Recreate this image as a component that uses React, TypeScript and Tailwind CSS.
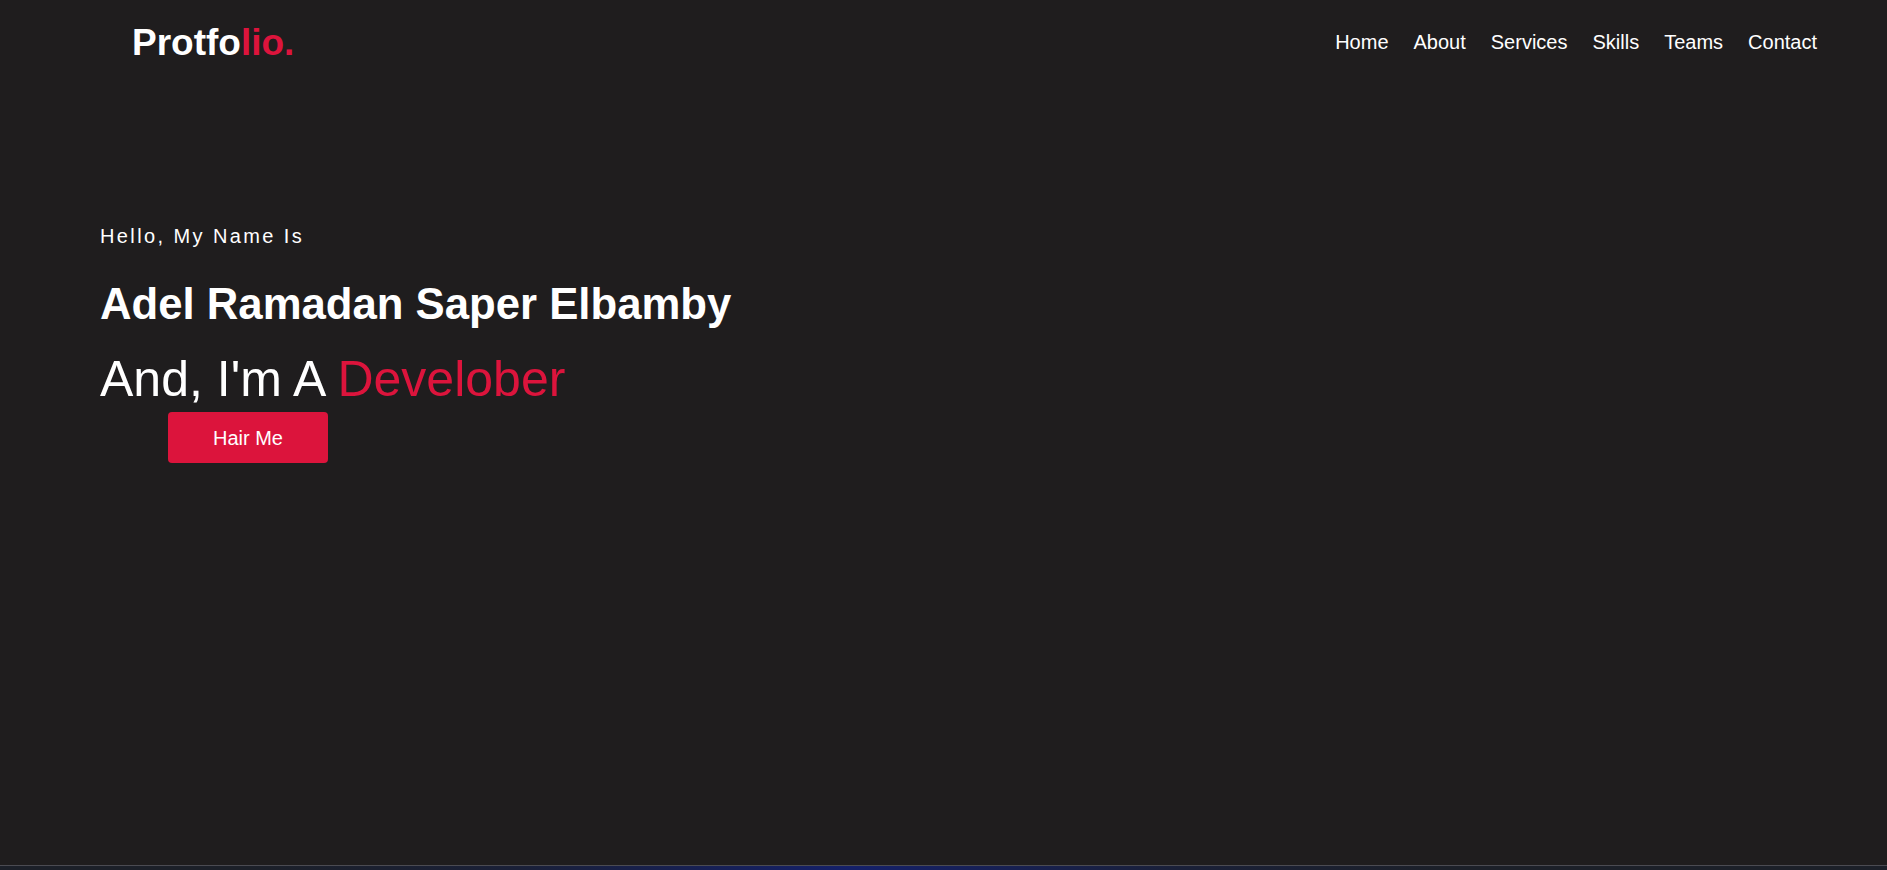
const links = ['Home', 'About', 'Services', 'Skills', 'Teams', 'Contact']

export default function App() {
  return (
    <div className="min-h-screen bg-[#1f1d1e] font-['Liberation_Sans',Arial,sans-serif] text-white">
      <section className="flex h-[865px] flex-col">
        <header className="flex h-[84px] items-center justify-between pl-[132px] pr-[70px]">
          <a href="#" className="text-[37px] font-bold leading-[37px]">
            Protfo<span className="text-[#dc143c]">lio.</span>
          </a>
          <nav className="flex gap-[25px]">
            {links.map((l) => (
              <a key={l} href="#" className="text-[20px] leading-[20px]">
                {l}
              </a>
            ))}
          </nav>
        </header>

        <div className="flex flex-col items-start pl-[100px] pt-[142px]">
          <p className="text-[20px] leading-[20px] tracking-[2.4px]">Hello, My Name Is</p>
          <h1 className="mt-[36px] text-[43.7px] font-bold leading-[44px]">Adel Ramadan Saper Elbamby</h1>
          <h2 className="mt-[28px] text-[50px] leading-[50px]">
            And, I'm A <span className="text-[#dc143c]">Develober</span>
          </h2>
          <button className="ml-[68px] mt-[8px] h-[51px] w-[160px] rounded-[4px] bg-[#dc143c] text-[20px] text-white">
            Hair Me
          </button>
        </div>
      </section>

      <section className="h-[300px] border-t border-[#4b4b52] bg-[radial-gradient(ellipse_600px_120px_at_45%_0%,#14206a_0%,#1a2038_55%,#1c2029_100%)]" />
    </div>
  )
}
